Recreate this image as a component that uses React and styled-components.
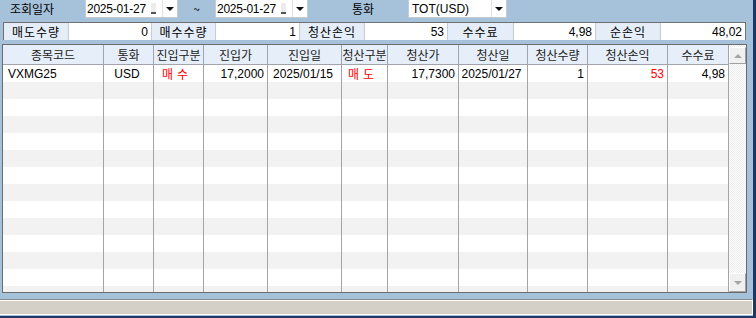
import React from 'react'
import styled, { createGlobalStyle } from 'styled-components'

const GlobalStyle = createGlobalStyle`
  html, body {
    margin: 0;
    padding: 0;
    background: #a6c2da;
  }
  body {
    font-family: "Liberation Sans", "Noto Sans CJK KR", sans-serif;
    font-size: 12px;
    color: #000;
  }
`

const KR = `"Noto Sans CJK KR", "Liberation Sans", sans-serif`

const Window = styled.div`
  width: 756px;
  height: 318px;
  box-sizing: border-box;
  background: #a6c2da;
  border-right: 3px solid #1d3866;
  border-bottom: 2px solid #1d3866;
  display: flex;
  flex-direction: column;
  overflow: hidden;
`

const Toolbar = styled.div`
  display: flex;
  align-items: center;
  height: 18px;
  padding-left: 10px;
`

const Caption = styled.span`
  font-family: ${KR};
  font-size: 12px;
  width: ${p => p.w}px;
  margin-left: ${p => p.ml || 0}px;
  text-align: ${p => p.align || 'left'};
  line-height: 18px;
`

const Combo = styled.div`
  display: flex;
  align-items: stretch;
  width: ${p => p.w}px;
  height: 18px;
  box-sizing: border-box;
  background: #fff;
  border: 1px solid #c3ccd6;
  border-top: none;
`

const ComboText = styled.span`
  flex: 1;
  display: flex;
  align-items: center;
  padding-left: ${p => p.pl || 1}px;
  font-size: 12px;
  letter-spacing: ${p => p.ls || 0}px;
  white-space: nowrap;
  overflow: hidden;
`

const Spin = styled.span`
  align-self: center;
  flex-shrink: 0;
  width: 5px;
  height: 11px;
  margin-right: 6px;
  background: #ececec;
  border-bottom: 2px solid #555;
  box-sizing: border-box;
`

const DropButton = styled.span`
  width: 14px;
  flex-shrink: 0;
  display: flex;
  align-items: center;
  justify-content: center;
  border-left: 1px solid #e2e2e2;
  &::after {
    content: '';
    border-left: 4px solid transparent;
    border-right: 4px solid transparent;
    border-top: 4px solid #111;
  }
`

const Summary = styled.div`
  display: grid;
  grid-template-columns: 65px 83px 64px 84px 65px 83px 66px 82px 65px 84px;
  width: 743px;
  height: 18px;
  box-sizing: border-box;
  margin: 4px 0 0 3px;
  border: 1px solid #707070;
  background: #fff;
`

const SumCell = styled.div`
  display: flex;
  align-items: center;
  justify-content: ${p => (p.label ? 'center' : 'flex-end')};
  padding-right: ${p => (p.label ? 0 : 3)}px;
  background: ${p => (p.label ? '#e4edf8' : '#fff')};
  border-right: 1px solid #c4ccd6;
  font-family: ${p => (p.label ? KR : 'inherit')};
  letter-spacing: ${p => (p.label ? 1 : 0)}px;
  font-size: 12px;
  &:last-child {
    border-right: none;
  }
`

const Table = styled.div`
  display: flex;
  width: 745px;
  height: 249px;
  box-sizing: border-box;
  margin: 4px 0 0 2px;
  border: 1px solid #6c6c6c;
  background: #fff;
  overflow: hidden;
`

const TableBody = styled.div`
  flex: 1;
  display: flex;
  flex-direction: column;
  overflow: hidden;
`

const COLS = '101px 50px 50px 64px 74px 46px 71px 69px 60px 80px 61px'

const HeadRow = styled.div`
  display: grid;
  grid-template-columns: ${COLS};
  height: 20px;
  flex-shrink: 0;
  box-sizing: border-box;
  background: #e6eff9;
  border-bottom: 1px solid #a3a3ab;
`

const HeadCell = styled.div`
  display: flex;
  align-items: center;
  justify-content: center;
  border-right: 1px solid #a3a3ab;
  font-family: ${KR};
  font-size: 12px;
  color: #222;
  white-space: nowrap;
  overflow: hidden;
`

const Row = styled.div`
  display: grid;
  grid-template-columns: ${COLS};
  height: 17px;
  flex-shrink: 0;
  background: ${p => (p.odd ? '#f2f2f2' : '#fff')};
`

const Cell = styled.div`
  display: flex;
  align-items: center;
  justify-content: ${p => p.align || 'flex-end'};
  padding: 0 ${p => (p.align === 'flex-start' ? 0 : 3)}px 0 ${p => (p.align === 'flex-start' ? 5 : 0)}px;
  border-right: 1px solid #a3a3ab;
  color: ${p => (p.red ? '#ff0000' : '#000')};
  font-family: ${p => (p.kr ? KR : 'inherit')};
  letter-spacing: ${p => (p.kr ? 4 : 0)}px;
  font-size: 12px;
  white-space: nowrap;
  overflow: hidden;
`

const ScrollBar = styled.div`
  width: 17px;
  display: flex;
  flex-direction: column;
  background-color: #f6f6f6;
  background-image: repeating-conic-gradient(#ffffff 0 25%, #ececec 0 50%);
  background-size: 2px 2px;
`

const ScrollButton = styled.div`
  height: ${p => p.h}px;
  margin-top: ${p => p.mt || 0}px;
  box-sizing: border-box;
  background: #f0f0f0;
  border-top: 1px solid #fff;
  border-left: 1px solid #fff;
  border-right: 1px solid #a0a0a0;
  border-bottom: 1px solid #a0a0a0;
  display: flex;
  align-items: center;
  justify-content: center;
  &::after {
    content: '';
    border-left: 4px solid transparent;
    border-right: 4px solid transparent;
    ${p => (p.up ? 'border-bottom: 4px solid #a4a4a4;' : 'border-top: 4px solid #a4a4a4;')}
  }
`

const Track = styled.div`
  flex: 1;
`

const StatusBar = styled.div`
  margin-top: 6px;
  height: 16px;
  box-sizing: border-box;
  border-top: 1px solid #8a8a8a;
  border-bottom: 1px solid #fff;
  border-right: 1px solid #fff;
  background: #d4d0c8;
  box-shadow: inset 0 1px 0 #ffffff;
`

const summary = [
  ['매도수량', '0'],
  ['매수수량', '1'],
  ['청산손익', '53'],
  ['수수료', '4,98'],
  ['순손익', '48,02']
]

const headers = [
  '종목코드', '통화', '진입구분', '진입가', '진입일', '청산구분',
  '청산가', '청산일', '청산수량', '청산손익', '수수료'
]

function DataRow({ odd, data }) {
  if (!data) {
    return (
      <Row odd={odd}>
        {headers.map(h => <Cell key={h} />)}
      </Row>
    )
  }
  return (
    <Row odd={odd}>
      <Cell align="flex-start">{data.code}</Cell>
      <Cell align="center">{data.cur}</Cell>
      <Cell align="center" kr red>{data.entryType}</Cell>
      <Cell>{data.entryPrice}</Cell>
      <Cell align="center">{data.entryDate}</Cell>
      <Cell align="center" kr red>{data.exitType}</Cell>
      <Cell>{data.exitPrice}</Cell>
      <Cell align="center">{data.exitDate}</Cell>
      <Cell>{data.qty}</Cell>
      <Cell red>{data.pnl}</Cell>
      <Cell>{data.fee}</Cell>
    </Row>
  )
}

const rows = [
  {
    code: 'VXMG25',
    cur: 'USD',
    entryType: '매수',
    entryPrice: '17,2000',
    entryDate: '2025/01/15',
    exitType: '매도',
    exitPrice: '17,7300',
    exitDate: '2025/01/27',
    qty: '1',
    pnl: '53',
    fee: '4,98'
  }
]

export default function App() {
  const filled = Array.from({ length: 14 }, (_, i) => rows[i])

  return (
    <>
      <GlobalStyle />
      <Window>
        <Toolbar>
          <Caption w={75}>조회일자</Caption>
          <Combo w={93}>
            <ComboText ls={-0.25}>2025-01-27</ComboText>
            <Spin />
            <DropButton />
          </Combo>
          <Caption w={37} align="center">~</Caption>
          <Combo w={93}>
            <ComboText ls={-0.25}>2025-01-27</ComboText>
            <Spin />
            <DropButton />
          </Combo>
          <Caption w={56} ml={44}>통화</Caption>
          <Combo w={99}>
            <ComboText pl={3}>TOT(USD)</ComboText>
            <DropButton />
          </Combo>
        </Toolbar>

        <Summary>
          {summary.map(([label, value]) => (
            <React.Fragment key={label}>
              <SumCell label>{label}</SumCell>
              <SumCell>{value}</SumCell>
            </React.Fragment>
          ))}
        </Summary>

        <Table>
          <TableBody>
            <HeadRow>
              {headers.map(h => <HeadCell key={h}>{h}</HeadCell>)}
            </HeadRow>
            {filled.map((r, i) => (
              <DataRow key={i} odd={i % 2 === 1} data={r} />
            ))}
          </TableBody>
          <ScrollBar>
            <ScrollButton up h={17} mt={2} />
            <Track />
            <ScrollButton h={19} />
          </ScrollBar>
        </Table>

        <StatusBar />
      </Window>
    </>
  )
}
